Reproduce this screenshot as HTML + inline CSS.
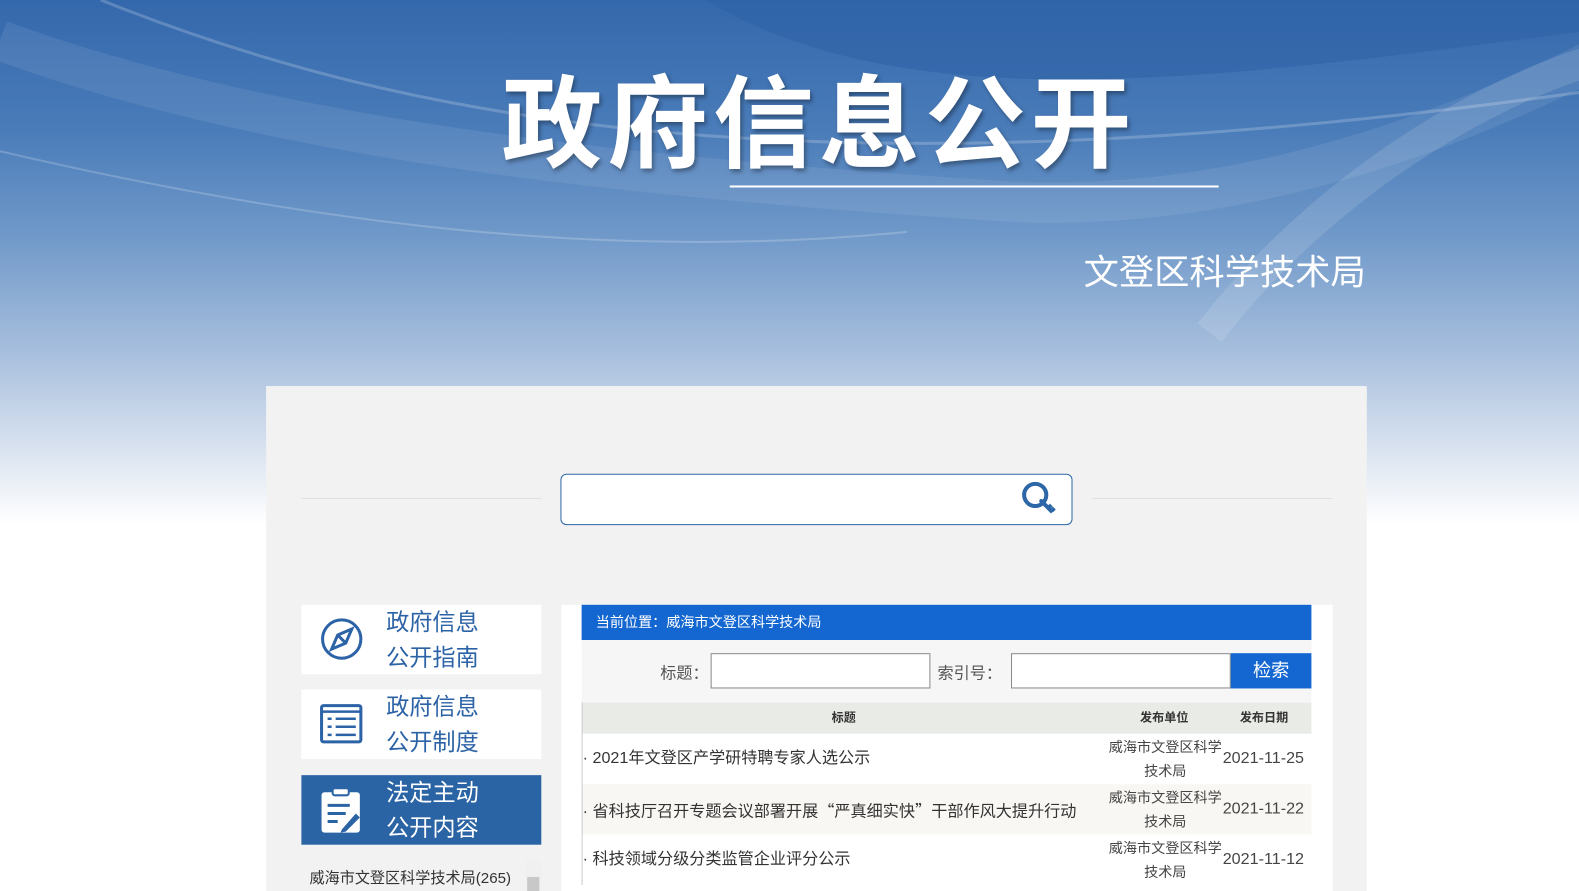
<!DOCTYPE html>
<html><head><meta charset="utf-8"><style>
*{margin:0;padding:0;box-sizing:border-box}
body{width:1579px;height:884px;overflow:hidden;font-family:"Liberation Sans","Noto Sans CJK SC",sans-serif;background:#fff;position:relative}
.cj{font-family:"Noto Sans CJK SC",sans-serif}
#w{position:absolute;left:0;top:0;width:1579px;height:884px;transform:scale(1.008);transform-origin:0 0}
.bg{position:absolute;left:0;top:0;width:1579px;height:520px;background:linear-gradient(180deg,#3468ac 0%,#4a7cb9 25%,#7099c9 45%,#a9c0de 68%,#dfe7f2 88%,#fff 100%)}
.sw{position:absolute;left:0;top:0;width:1579px;height:520px;overflow:hidden}
.t1{position:absolute;left:0;width:1579px;top:42px;text-align:center;padding-left:46px;color:#fff;font-size:100px;font-weight:bold;letter-spacing:5px;text-shadow:2px 3px 4px rgba(0,0,0,.35)}
.ul{position:absolute;left:724px;top:184px;width:485px;height:2px;background:#fff}
.t2{position:absolute;right:224px;top:242px;color:#fff;font-size:35px}
.panel{position:absolute;left:264px;top:383px;width:1092px;height:501px;background:#f2f2f2}
.line{position:absolute;top:494px;height:1px;background:#e0e0e0}
.search{position:absolute;left:556px;top:470px;width:508px;height:51px;border:1px solid #2d67a8;border-radius:6px;background:#fff}
.nav{position:absolute;left:299px;width:238px;height:69px;background:#fff;color:#2c63a6;font-size:23px;line-height:35px}
.nav .tx{position:absolute;left:84px;top:0}
.nav svg{position:absolute;left:18px;top:12px}
.nav.on{background:#2b64a5;color:#fff}
.tbl{position:absolute;left:557px;top:600px;width:765px;height:284px;background:#fff}
.bar{position:absolute;left:577px;top:600px;width:724px;height:35px;background:#1467d1;color:#fff;font-size:14px;line-height:35px;padding-left:14px}
.form{position:absolute;left:577px;top:635px;width:724px;height:62px;background:#f6f6f6;font-size:16px;color:#555}
.inp{position:absolute;top:13px;height:35px;border:1px solid #888;background:#fff}
.btn{position:absolute;left:644px;top:13px;width:80px;height:35px;background:#1467d1;color:#fff;text-align:center;line-height:35px;font-size:18px}
.th{position:absolute;left:577px;top:697px;width:724px;height:31px;background:#e9ebe6;font-size:12px;font-weight:bold;color:#333;line-height:31px;border-left:1px solid #ccc}
.row{position:absolute;left:577px;width:724px;height:50px;font-size:16px;color:#333;border-left:1px solid #ccc}
.row .a{position:absolute;left:0;top:0;line-height:50px}
.row .u{position:absolute;left:518px;width:120px;top:1px;text-align:center;font-size:14px;line-height:24px;color:#444}
.row .d{position:absolute;left:635px;top:0;line-height:50px;color:#444;font-size:16px}
</style></head><body><div id="w">
<div class="bg"></div>
<svg class="sw" width="1579" height="520">
<path d="M700 0 C900 120 1200 80 1579 30 L1579 0Z" fill="#2f63a6" opacity=".6"/>
<path d="M0 40 C300 150 700 180 1000 200 C1200 210 1400 150 1579 60" stroke="#fff" stroke-width="40" fill="none" opacity=".08"/>
<path d="M100 0 C400 120 800 200 1579 90" stroke="#fff" stroke-width="3" fill="none" opacity=".2"/>
<path d="M1200 330 C1300 200 1450 100 1579 60" stroke="#fff" stroke-width="30" fill="none" opacity=".12"/>
<path d="M0 150 C300 220 600 260 900 230" stroke="#fff" stroke-width="2" fill="none" opacity=".2"/>
</svg>
<div class="t1">政府信息公开</div>
<div class="ul"></div>
<div class="t2">文登区科学技术局</div>
<div class="panel"></div>
<div class="line" style="left:299px;width:238px"></div>
<div class="line" style="left:1084px;width:238px"></div>
<div class="search"><svg width="40" height="40" style="position:absolute;left:455px;top:5px" viewBox="0 0 40 40"><circle cx="15" cy="15" r="11" stroke="#2d67a8" stroke-width="4" fill="none"/><circle cx="21" cy="21" r="2" fill="#2d67a8"/><path d="M21 21 L32 32 M28 28 L31 25 M31 31 L34 28" stroke="#2d67a8" stroke-width="4" fill="none"/></svg></div>

<div class="nav" style="top:600px"><svg width="44" height="44" viewBox="0 0 44 44"><circle cx="22" cy="22" r="19" stroke="#2c63a6" stroke-width="3" fill="none"/><path d="M32 12 L26 26 L12 32 L18 18Z M19 19 L25 25" stroke="#2c63a6" stroke-width="3" fill="none"/></svg><div class="tx">政府信息<br>公开指南</div></div>
<div class="nav" style="top:684px"><svg width="44" height="44" viewBox="0 0 44 44"><rect x="2" y="4" width="39" height="36" rx="2" stroke="#2c63a6" stroke-width="3" fill="none"/><path d="M2 10 H41 M8 17 H12 M16 17 H36 M8 25 H12 M16 25 H36 M8 33 H12 M16 33 H36" stroke="#2c63a6" stroke-width="2.5"/></svg><div class="tx">政府信息<br>公开制度</div></div>
<div class="nav on" style="top:769px"><svg width="44" height="48" viewBox="0 0 44 48"><rect x="2" y="5" width="38" height="40" rx="3" fill="#fff"/><rect x="13" y="1" width="16" height="7" rx="2" fill="#fff" stroke="#2b64a5" stroke-width="2"/><path d="M8 18 H30 M8 26 H26 M8 34 H18" stroke="#2b64a5" stroke-width="3"/><path d="M22 42 L36 26 L40 30 L26 44 L21 45Z" fill="#2b64a5"/></svg><div class="tx">法定主动<br>公开内容</div></div>
<div style="position:absolute;left:307px;top:860px;font-size:15px;color:#333">威海市文登区科学技术局(265)</div>
<div style="position:absolute;left:521px;top:854px;width:16px;height:30px;background:#f0f0f0"><div style="position:absolute;left:2px;top:16px;width:12px;height:14px;background:#c8c8c8"></div></div>

<div class="tbl"></div>
<div class="bar cj">当前位置：威海市文登区科学技术局</div>
<div class="form"><span class="cj" style="position:absolute;left:78px;top:19px">标题：</span><div class="inp" style="left:128px;width:218px"></div><span class="cj" style="position:absolute;left:353px;top:19px">索引号：</span><div class="inp" style="left:426px;width:218px"></div><div class="btn">检索</div></div>
<div class="th"><span style="position:absolute;left:247px">标题</span><span style="position:absolute;left:553px">发布单位</span><span style="position:absolute;left:652px">发布日期</span></div>
<div class="row" style="top:728px;background:#fff"><div class="a">· 2021年文登区产学研特聘专家人选公示</div><div class="u">威海市文登区科学技术局</div><div class="d">2021-11-25</div></div>
<div class="row" style="top:778px;background:#f8f7f3"><div class="a">· 省科技厅召开专题会议部署开展<span class="cj">“</span>严真细实快<span class="cj">”</span>干部作风大提升行动</div><div class="u">威海市文登区科学技术局</div><div class="d">2021-11-22</div></div>
<div class="row" style="top:828px;background:#fff"><div class="a">· 科技领域分级分类监管企业评分公示</div><div class="u">威海市文登区科学技术局</div><div class="d">2021-11-12</div></div>
</div></body></html>
